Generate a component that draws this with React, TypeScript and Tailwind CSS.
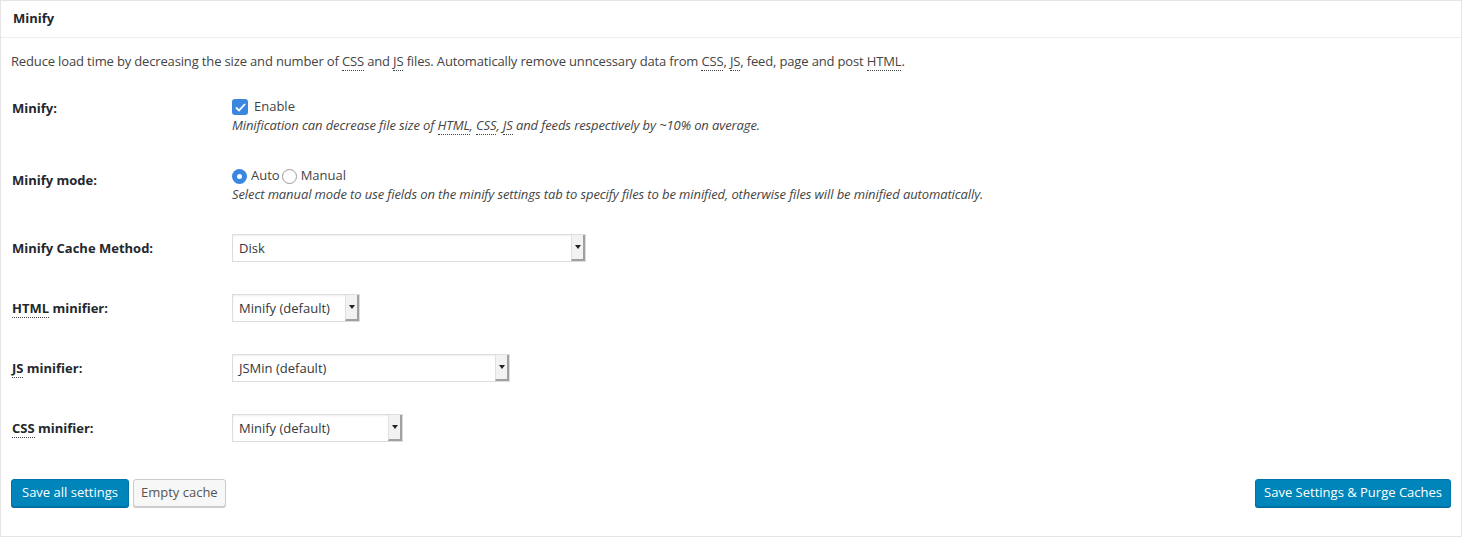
import React from "react";

const font = { fontFamily: '"Open Sans", "Noto Sans", sans-serif' };

const Abbr = ({ children }: { children: React.ReactNode }) => (
  <abbr className="no-underline border-b border-dotted border-[#444]">{children}</abbr>
);

const Select = ({ value, width }: { value: string; width: string }) => (
  <div className={`flex h-[28px] ${width} bg-white border border-[#ddd] shadow-[inset_0_1px_2px_rgba(0,0,0,0.07)]`}>
    <span className="flex-1 pl-[6px] leading-[26px] text-[13px] text-[#32373c]">{value}</span>
    <span className="flex w-[14px] items-center justify-center bg-[#f2f2f2] border-r-2 border-b-2 border-[#a0a0a0] border-l border-l-[#e0e0e0]">
      <svg width="6" height="4" viewBox="0 0 6 4">
        <path d="M0 0h6L3 4z" fill="#222" />
      </svg>
    </span>
  </div>
);

const Row = ({
  label,
  children,
  labelClass,
}: {
  label: React.ReactNode;
  children: React.ReactNode;
  labelClass?: string;
}) => (
  <div className="grid grid-cols-[231px_1fr]">
    <div className={`pl-[11px] font-bold text-[13px] text-[#23282d] ${labelClass ?? "pt-[19px]"}`}>{label}</div>
    <div className="py-[15px]">{children}</div>
  </div>
);

const SelectRow = ({ label, children }: { label: React.ReactNode; children: React.ReactNode }) => (
  <div className="grid grid-cols-[231px_1fr] items-center py-[16px]">
    <div className="pl-[11px] font-bold text-[13px] text-[#23282d] pt-[1px]">{label}</div>
    <div>{children}</div>
  </div>
);

export default function App() {
  return (
    <div className="w-[1462px] h-[537px] bg-white" style={font}>
      <div className="h-[537px] border border-[#e5e5e5] text-[13px] text-[#444]">
        <div className="h-[37px] border-b border-[#eee] flex items-center pl-[12px]">
          <h3 className="font-bold text-[13px] text-[#23282d]">Minify</h3>
        </div>
        <p className="pl-[10px] pt-[13px] h-[42px] leading-[20px] tracking-[-0.15px]">
          Reduce load time by decreasing the size and number of <Abbr>CSS</Abbr> and <Abbr>JS</Abbr> files.
          Automatically remove unncessary data from <Abbr>CSS</Abbr>, <Abbr>JS</Abbr>, feed, page and post{" "}
          <Abbr>HTML</Abbr>.
        </p>

        <Row label="Minify:">
          <label className="flex items-center h-[20px] mt-[2px] -mb-[1px]">
            <span className="w-[16px] h-[16px] rounded-[3px] bg-[#3b87e0] flex items-center justify-center mr-[6px]">
              <svg width="11" height="9" viewBox="0 0 11 9">
                <path d="M1 4.5l3 3 6-6.5" fill="none" stroke="#fff" strokeWidth="1.8" />
              </svg>
            </span>
            <span className="text-[13px]">Enable</span>
          </label>
          <p className="italic text-[13px] leading-[18px] tracking-[-0.1px]">
            Minification can decrease file size of <Abbr>HTML</Abbr>, <Abbr>CSS</Abbr>, <Abbr>JS</Abbr> and feeds
            respectively by ~10% on average.
          </p>
        </Row>

        <Row label="Minify mode:" labelClass="pt-[22px]">
          <div className="flex items-center h-[20px] mt-[2px] -mb-[1px]">
            <span className="w-[15px] h-[15px] rounded-full bg-[#3b87e0] flex items-center justify-center mr-[4px]">
              <span className="w-[5px] h-[5px] rounded-full bg-white" />
            </span>
            <span>Auto</span>
            <span className="w-[15px] h-[15px] rounded-full border border-[#999] ml-[2px] mr-[4px]" />
            <span>Manual</span>
          </div>
          <p className="italic text-[13px] leading-[18px] tracking-[-0.1px]">
            Select manual mode to use fields on the minify settings tab to specify files to be minified, otherwise files
            will be minified automatically.
          </p>
        </Row>

        <SelectRow label="Minify Cache Method:">
          <Select value="Disk" width="w-[354px]" />
        </SelectRow>
        <SelectRow
          label={
            <>
              <Abbr>HTML</Abbr> minifier:
            </>
          }
        >
          <Select value="Minify (default)" width="w-[128px]" />
        </SelectRow>
        <SelectRow
          label={
            <>
              <Abbr>JS</Abbr> minifier:
            </>
          }
        >
          <Select value="JSMin (default)" width="w-[278px]" />
        </SelectRow>
        <SelectRow
          label={
            <>
              <Abbr>CSS</Abbr> minifier:
            </>
          }
        >
          <Select value="Minify (default)" width="w-[171px]" />
        </SelectRow>

        <div className="flex items-center justify-between px-[10px] pt-[21px]">
          <div className="flex gap-[4px]">
            <button className="h-[28px] px-[10px] rounded-[3px] bg-[#0085ba] border border-[#0073aa] shadow-[0_1px_0_#006799] text-white text-[13px]">
              Save all settings
            </button>
            <button className="h-[28px] px-[7px] rounded-[3px] bg-[#f7f7f7] border border-[#ccc] shadow-[0_1px_0_#ccc] text-[#555] text-[13px]">
              Empty cache
            </button>
          </div>
          <button className="h-[28px] px-[8px] rounded-[3px] bg-[#0085ba] border border-[#0073aa] shadow-[0_1px_0_#006799] text-white text-[13px]">
            Save Settings &amp; Purge Caches
          </button>
        </div>
      </div>
    </div>
  );
}
